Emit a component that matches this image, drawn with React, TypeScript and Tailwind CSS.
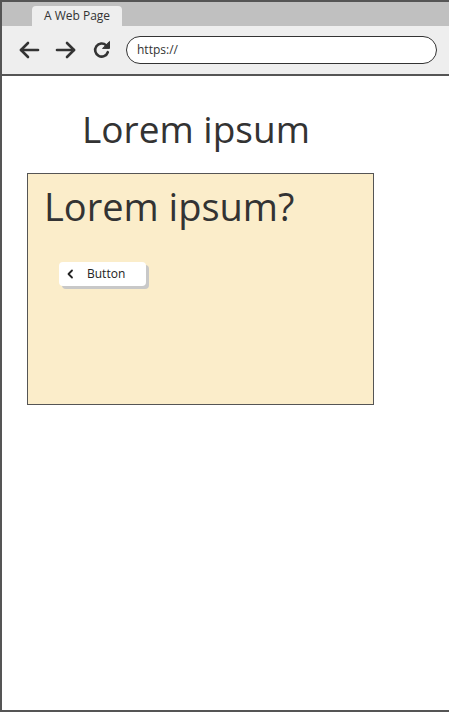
import React from "react";

const ArrowLeft = () => (
  <svg width="22" height="18" viewBox="0 0 22 18" fill="none" stroke="#333" strokeWidth="2.6" strokeLinecap="round" strokeLinejoin="round">
    <path d="M20 9H3" />
    <path d="M10 2L3 9l7 7" />
  </svg>
);

const ArrowRight = () => (
  <svg width="22" height="18" viewBox="0 0 22 18" fill="none" stroke="#333" strokeWidth="2.6" strokeLinecap="round" strokeLinejoin="round">
    <path d="M2 9h17" />
    <path d="M12 2l7 7-7 7" />
  </svg>
);

const Reload = () => (
  <svg width="20" height="20" viewBox="0 0 20 20" fill="none" stroke="#333" strokeWidth="2.6" strokeLinecap="round" strokeLinejoin="round">
    <path d="M15.8 12.2A6.5 6.5 0 1 1 14.2 5.4" />
    <path d="M17.5 1.8v6.6h-6.6z" fill="#333" stroke="#333" strokeWidth="1" />
  </svg>
);

export default function App() {
  return (
    <div
      className="w-[449px] h-[712px] bg-white border-l-2 border-t-2 border-b-2 border-[#555] flex flex-col overflow-hidden text-[#333]"
      style={{ fontFamily: "'Open Sans', 'Noto Sans', sans-serif" }}
    >
      {/* Tab strip */}
      <div className="h-[24px] shrink-0 bg-[#c0c0c0] flex items-end pl-[30px]">
        <div className="w-[90px] h-[20px] bg-[#eeeeee] rounded-t-[4px] flex items-center justify-center text-[12px] text-[#333]">
          A Web Page
        </div>
      </div>

      {/* Toolbar */}
      <div className="h-[50px] shrink-0 bg-[#eeeeee] border-b-2 border-[#555] flex items-center pl-[16px] pr-[12px]">
        <div className="flex items-center gap-[15px]">
          <ArrowLeft />
          <ArrowRight />
          <Reload />
        </div>
        <div className="ml-[14px] flex-1 h-[28px] bg-white border-[1.5px] border-[#333] rounded-full flex items-center pl-[10px] text-[12px]">
          https://
        </div>
      </div>

      {/* Page */}
      <div className="flex flex-col pt-[34px] pl-[25px]">
        <h1 className="text-[37px] leading-none ml-[55px] mb-[26px] font-normal">Lorem ipsum</h1>
        <div className="w-[347px] h-[232px] shrink-0 bg-[#fbedca] border-[1.5px] border-[#555] pt-[13px] pl-[16px]">
          <h2 className="text-[38px] leading-none font-normal">Lorem ipsum?</h2>
          <button className="mt-[37px] ml-[15px] w-[87px] h-[24px] bg-white rounded-[4px] shadow-[3px_3px_0_#c8c8c8] flex items-center pl-[7px] text-[12px] text-[#222]">
            <svg width="8" height="10" viewBox="0 0 8 10" fill="none" stroke="#222" strokeWidth="1.8" strokeLinecap="round" strokeLinejoin="round">
              <path d="M6 1.5L2.5 5 6 8.5" />
            </svg>
            <span className="ml-[13px]">Button</span>
          </button>
        </div>
      </div>
    </div>
  );
}
